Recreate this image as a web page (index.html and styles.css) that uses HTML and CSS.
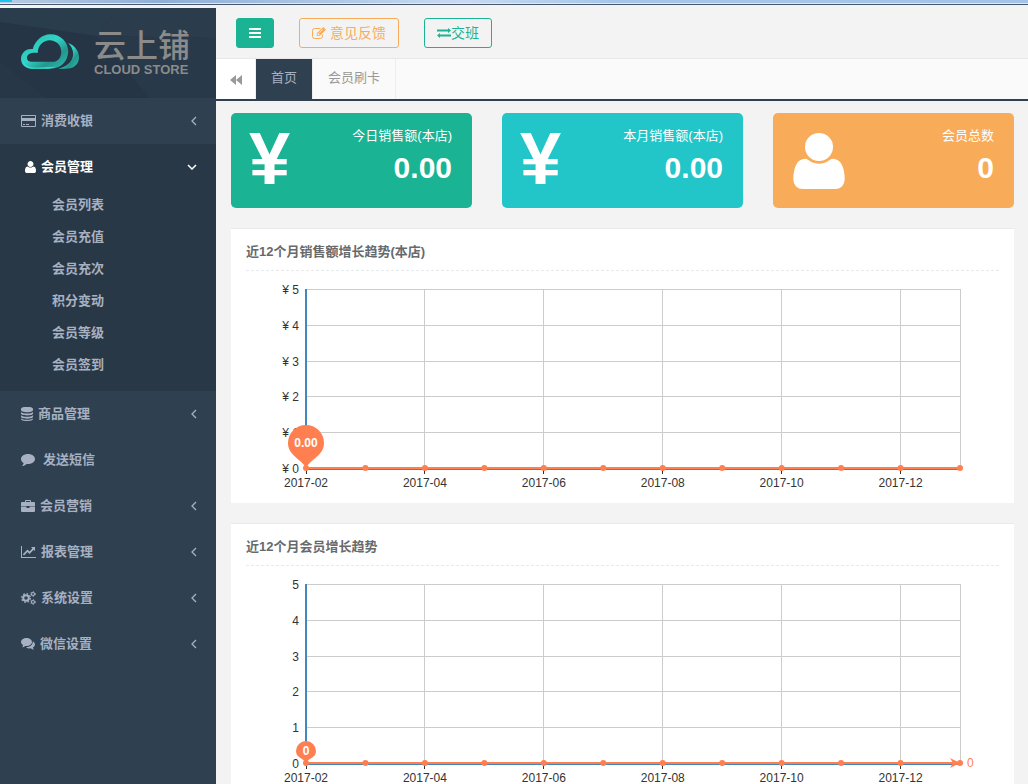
FILE: index.html
```html
<!DOCTYPE html>
<html lang="zh-CN">
<head>
<meta charset="utf-8">
<title>云上铺 CLOUD STORE</title>
<link rel="stylesheet" href="styles.css">
</head>
<body>
<svg class="defs" aria-hidden="true">
  <defs>
    <symbol id="user" viewBox="0 128 1408 1536"><path d="M1408 1405q0 120-73 189.500t-194 69.500h-874q-121 0-194-69.500t-73-189.500q0-53 3.500-103.500t14-109 26.500-108.500 43-97.500 62-81 85.500-53.500 111.500-20q9 0 42 21.500t74.500 48 108 48 133.500 21.500 133.500-21.500 108-48 74.500-48 42-21.500q61 0 111.500 20t85.500 53.500 62 81 43 97.500 26.500 108.500 14 109 3.500 103.500zm-320-893q0 159-112.500 271.500t-271.500 112.500-271.500-112.500-112.500-271.500 112.500-271.500 271.500-112.500 271.500 112.500 112.500 271.500z"/></symbol>
    <symbol id="left" viewBox="0 0 6 10"><path d="M5 1L1 5l4 4" fill="none" stroke="currentColor" stroke-width="1.300"/></symbol>
  </defs>
</svg>
<div class="strip"><i></i></div>
<div class="app">
  <aside class="sidebar">
    <div class="brand">
      <svg class="facets" viewBox="0 0 216 90" preserveAspectRatio="none" aria-hidden="true"><path d="M0 0h118L97 28 0 14z" fill="#2a3d4d"/><path d="M118 0h98v30L97 28z" fill="#2b3d4c"/><path d="M97 28l119 2v60h-66z" fill="#283949"/><path d="M0 54l46 36H0z" fill="#273747"/></svg>
      <svg class="cloud" viewBox="0 0 60 36" aria-hidden="true">
        <defs><linearGradient id="teal" x1="0" y1="0" x2="1" y2="1"><stop offset="0" stop-color="#27b7a8"/><stop offset=".45" stop-color="#30d5c8"/><stop offset=".7" stop-color="#23978d"/><stop offset="1" stop-color="#2bc1b4"/></linearGradient></defs>
        <path d="M48 9c5 1 11 7 11 14 0 8-6 12-13 12h-8c9-2 15-8 15-15 0-5-2-8-5-11z" fill="url(#teal)"/>
        <path fill-rule="evenodd" d="M12 15C14 7 21 0 30 0c10 0 18 8 18 17 0 10-7 18-18 18H12C5 35 0 31 0 25 0 19 5 14 12 15zM17 19C17 11 23 6 29 6c7 0 12 5 12 12 0 6-4 10-9 10H11c-3 0-5-2-5-4 0-4 5-6 11-5z" fill="url(#teal)"/>
        <path d="M2 27c2 5 7 7 12 7l22-1c-3 1-6 2-9 2H12C6 35 2 32 2 27z" fill="#35ddd0"/>
      </svg>
      <div class="wordmark"><b>云上铺</b><span>CLOUD STORE</span></div>
    </div>
    <nav>
      <a class="item" href="#"><svg width="15" height="12" viewBox="0 0 15 12"><path fill-rule="evenodd" d="M1 0h13q1 0 1 1v10q0 1-1 1H1q-1 0-1-1V1q0-1 1-1zm0 1v2h13V1zm0 5v5h13V6zm1 3h2v1H2zm3 0h3v1H5z"/></svg>消费收银<svg class="arrow" width="6" height="10"><use href="#left"/></svg></a>
      <div class="group">
        <a class="item current" href="#"><svg width="11" height="12"><use href="#user"/></svg>会员管理<svg class="arrow" width="10" height="6" viewBox="0 0 10 6"><path d="M1 1l4 4 4-4" fill="none" stroke="currentColor" stroke-width="1.500"/></svg></a>
        <ul><li><a href="#">会员列表</a></li><li><a href="#">会员充值</a></li><li><a href="#">会员充次</a></li><li><a href="#">积分变动</a></li><li><a href="#">会员等级</a></li><li><a href="#">会员签到</a></li></ul>
      </div>
      <a class="item" href="#"><svg width="12" height="14" viewBox="0 0 12 14"><path d="M0 2c0-3 12-3 12 0v1c0 3-12 3-12 0zM0 5c2 2 10 2 12 0v1.500c0 2.500-12 2.500-12 0zM0 8.300c2 2 10 2 12 0v1.500c0 2.500-12 2.500-12 0zM0 11.500c2 1.800 10 1.800 12 0v.5c0 2.700-12 2.700-12 0z"/></svg>商品管理<svg class="arrow" width="6" height="10"><use href="#left"/></svg></a>
      <a class="item spaced" href="#"><svg width="14" height="12" viewBox="0 0 14 12"><path d="M7 0c4 0 7 2.300 7 5s-3 5-7 5l-1.500-.1C4 11.300 2.700 11.900 1 12c1-1 1.500-1.800 1.600-3C1 8 0 6.600 0 5c0-2.700 3-5 7-5z"/></svg>发送短信</a>
      <a class="item" href="#"><svg width="14" height="12" viewBox="0 0 14 12"><path fill-rule="evenodd" d="M4 2V1q0-1 1-1h4q1 0 1 1v1h3q1 0 1 1v3.500H8.500V6h-3v.5H0V3q0-1 1-1zm1 0h4V1H5zM0 7h5.500v1h3V7H14v4q0 1-1 1H1q-1 0-1-1z"/></svg>会员营销<svg class="arrow" width="6" height="10"><use href="#left"/></svg></a>
      <a class="item" href="#"><svg width="15" height="12" viewBox="0 0 15 12"><path d="M0 0h1v11h14v1H0zM14 1v4l-1.300-1.300L8.500 8l-2-2L3 9.500 1.800 8.200 6.500 3.500l2 2 2.900-3.100L10 1z"/></svg>报表管理<svg class="arrow" width="6" height="10"><use href="#left"/></svg></a>
      <a class="item" href="#"><svg width="15" height="14" viewBox="0 0 15 14"><g fill="none" stroke="currentColor"><circle cx="5" cy="7" r="2.800" stroke-width="2"/><circle cx="5" cy="7" r="4.300" stroke-width="1.300" stroke-dasharray="1.700 1.677"/><circle cx="12" cy="3" r="1.500" stroke-width="1.200"/><circle cx="12" cy="3" r="2.400" stroke-width=".9" stroke-dasharray="1.200 1.313"/><circle cx="12" cy="11" r="1.500" stroke-width="1.200"/><circle cx="12" cy="11" r="2.400" stroke-width=".9" stroke-dasharray="1.200 1.313"/></g></svg>系统设置<svg class="arrow" width="6" height="10"><use href="#left"/></svg></a>
      <a class="item" href="#"><svg width="14" height="12" viewBox="0 0 14 12"><path d="M5.500 0C8.600 0 11 1.800 11 4S8.600 8 5.500 8l-1.200-.1Q3 9 1 9.300 2 8.300 2.100 7.200 0 6 0 4c0-2.200 2.400-4 5.500-4z"/><path d="M11.800 3.300Q14 4.500 14 6.500T11.900 9.600q.1 1 1.100 2-2-.2-3.200-1.300-2.800.5-4.800-1.100c4 0 7-2.200 6.800-5.900z"/></svg>微信设置<svg class="arrow" width="6" height="10"><use href="#left"/></svg></a>
    </nav>
  </aside>
  <main>
    <header>
      <button class="btn menu" aria-label="菜单"><svg width="12" height="10" viewBox="0 0 12 10"><path d="M0 0h12v2H0zM0 4h12v2H0zM0 8h12v2H0z"/></svg></button>
      <button class="btn orange"><svg width="14" height="12" viewBox="0 0 14 12"><path d="M10.500 7.500v2q0 2-2 2h-6q-2 0-2-2v-6q0-2 2-2h6" fill="none" stroke="currentColor"/><path fill-rule="evenodd" d="M11.200 0L14 2.800 7.500 9H4.800V6.200zM5.600 6.700v1.500h1.500l.6-.6-1.500-1.500zM7 5.600l.3.300L11 2.400l-.4-.3z"/></svg>意见反馈</button>
      <button class="btn green"><svg width="14" height="10" viewBox="0 0 14 10"><path d="M0 1.500h11V0l3 2.500L11 5V3.500H0zM14 6.500H3V5L0 7.500 3 10V8.500h11z"/></svg>交班</button>
    </header>
    <nav class="tabs">
      <button class="back" aria-label="向左"><svg width="12" height="10" viewBox="0 0 12 10"><path d="M6 0v10L0 5zM12 0v10L6 5z"/></svg></button>
      <a class="on" href="#">首页</a><a href="#">会员刷卡</a>
    </nav>
    <div class="content">
      <div class="cards">
        <section class="card c1"><span class="yen">¥</span><div><h2>今日销售额(本店)</h2><strong>0.00</strong></div></section>
        <section class="card c2"><span class="yen">¥</span><div><h2>本月销售额(本店)</h2><strong>0.00</strong></div></section>
        <section class="card c3"><svg width="52" height="56"><use href="#user"/></svg><div><h2>会员总数</h2><strong>0</strong></div></section>
      </div>
      <section class="panel">
        <h3>近12个月销售额增长趋势(本店)</h3>
        <div class="chart"><svg class="plot" id="sales" role="img" aria-label="近12个月销售额增长趋势"></svg></div>
      </section>
      <section class="panel">
        <h3>近12个月会员增长趋势</h3>
        <div class="chart"><svg class="plot" id="members" role="img" aria-label="近12个月会员增长趋势"></svg></div>
      </section>
    </div>
  </main>
</div>
<script src="chart.js"></script>
</body>
</html>
```
FILE: styles.css
```css
* { box-sizing: border-box; }
body { margin: 0; height: 100vh; overflow: hidden; display: flex; flex-direction: column; background: #f3f3f4; color: #676a6c; font: 13px/18px "Liberation Sans", "Noto Sans CJK SC", sans-serif; }
a { color: inherit; text-decoration: none; }
button { font: inherit; margin: 0; cursor: pointer; }
h2, h3, ul { margin: 0; padding: 0; list-style: none; }
svg { fill: currentColor; flex: none; }
.defs { position: absolute; width: 0; height: 0; }
.strip { height: 5px; flex: none; background: linear-gradient(90deg, #b9cbe2, #8fafd6 16%, #c8daf0 45%, #a5c5e8 60%, #a3c4e8); border-bottom: 1px solid #45566d; box-shadow: inset 0 -1px #dfeaf5; }
.strip i { display: block; width: 12px; height: 2px; background: #18c5ef; }
.app { flex: 1; min-height: 0; display: flex; }
.sidebar { width: 216px; flex: none; margin-top: 3px; background: #2f4050; color: #a7b1c2; font-weight: 600; }
.brand { height: 90px; padding: 0 0 2px 21px; display: flex; align-items: center; gap: 14px; background: #253545; position: relative; }
.facets { position: absolute; inset: 0; width: 100%; height: 100%; }
.cloud { width: 59px; height: 36px; position: relative; }
.wordmark { position: relative; color: #8b8b8b; display: flex; flex-direction: column; }
.wordmark b { font-size: 32px; line-height: 36px; font-weight: 500; }
.wordmark span { font-size: 13px; line-height: 12px; font-weight: bold; }
.item { height: 46px; padding: 0 19px 0 21px; display: flex; align-items: center; gap: 5px; }
.item.spaced { gap: 8px; }
.item.current { color: #fff; padding-left: 25px; }
.arrow { margin-left: auto; }
.group { background: #293846; padding-bottom: 10px; }
.group .item { height: 45px; }
.group li a { display: block; line-height: 32px; padding-left: 52px; }
main { flex: 1; min-width: 0; display: flex; flex-direction: column; }
header { height: 53px; flex: none; padding: 13px 20px 0; display: flex; gap: 25px; }
.btn { height: 30px; padding: 0 12px; border: 1px solid; border-radius: 3px; background: none; font-size: 14px; display: flex; align-items: center; gap: 4px; }
.menu { background: #1ab394; border-color: #1ab394; color: #fff; }
.orange { color: #f8ac59; border-color: #f8ac59; }
.green { color: #1ab394; border-color: #1ab394; gap: 0; }
.tabs { height: 43px; flex: none; display: flex; background: #fafafa; border-top: 1px solid #e7e7e7; border-bottom: 2px solid #2f4050; color: #999; line-height: 38px; }
.back { width: 40px; padding: 0; border: 0; border-right: 1px solid #eee; background: #fff; color: #999; }
.back svg { vertical-align: middle; }
.tabs a { padding: 0 15px; border-right: 1px solid #eee; }
.tabs .on { background: #2f4050; background-clip: padding-box; color: #a7b1c2; }
.content { padding: 12px 14px 0 15px; display: flex; flex-direction: column; gap: 20px; }
.cards { display: grid; grid-template-columns: repeat(3, 1fr); gap: 30px; }
.card { height: 95px; border-radius: 5px; color: #fff; padding: 14px 20px; display: flex; justify-content: space-between; text-align: right; }
.c1 { background: #1ab394; }
.c2 { background: #23c6c8; }
.c3 { background: #f8ac59; }
.card > svg { margin-top: 6px; }
.yen { margin-left: -2px; font: bold 74px/64px "Liberation Sans", sans-serif; }
.card h2 { font-size: 13px; line-height: 18px; font-weight: 400; }
.card strong { display: block; font-size: 30px; line-height: 45px; }
.panel { background: #fff; border-top: 1px solid #e7eaec; padding: 14px 15px 0; flex: none; height: 275px; }
.panel h3 { font-size: 13px; line-height: 18px; padding-bottom: 9px; border-bottom: 1px dashed #e7eaec; }
.chart { padding: 18px 39px 0 60px; }
.plot { display: block; width: 100%; height: 179px; overflow: visible; font-size: 12px; fill: #333; }
.grid { stroke: #ccc; shape-rendering: crispEdges; }
.axis { stroke: #4488bb; stroke-width: 2; shape-rendering: crispEdges; }
.tick { stroke: #333; shape-rendering: crispEdges; }
.series { stroke: #ff7f50; stroke-width: 2; shape-rendering: crispEdges; }
.mark { fill: #ff7f50; }
.pin { fill: #fff; font-weight: bold; }
```
FILE: chart.js
```js
function draw(id, prefix, radius, label, average) {
  const height = 179, steps = 5, count = 12;
  const months = ["2017-02", "2017-04", "2017-06", "2017-08", "2017-10", "2017-12"];
  const x = i => (i * 100 / (count - 1)) + "%";
  let s = "";
  for (let i = 0; i <= steps; i++) {
    const y = Math.round(height * i / steps);
    s += `<line class="grid" x1="0" x2="100%" y1="${y}" y2="${y}"/>`;
    s += `<text x="-7" y="${y + 5}" text-anchor="end">${prefix}${steps - i}</text>`;
  }
  months.forEach((m, k) => {
    s += `<line class="grid" x1="${x(k * 2)}" x2="${x(k * 2)}" y1="0" y2="${height}"/>`;
    s += `<line class="tick" x1="${x(k * 2)}" x2="${x(k * 2)}" y1="${height}" y2="${height + 6}"/>`;
    s += `<text x="${x(k * 2)}" y="${height + 19}" text-anchor="middle">${m}</text>`;
  });
  s += `<line class="grid" x1="100%" x2="100%" y1="0" y2="${height}"/>`;
  s += `<line class="axis" x1="0" x2="0" y1="0" y2="${height}"/>`;
  s += `<line class="axis" x1="0" x2="100%" y1="${height + 1}" y2="${height + 1}"/>`;
  s += `<line class="series" x1="0" x2="100%" y1="${height}" y2="${height}"/>`;
  for (let i = 0; i < count; i++) s += `<circle class="mark" cx="${x(i)}" cy="${height}" r="3"/>`;
  const r = radius, cy = height - (r > 10 ? 25 : 12);
  s += `<path class="mark" d="M0 ${height}C${-r / 4} ${height - r / 2} ${-r} ${cy + r * 0.7} ${-r} ${cy}A${r} ${r} 0 0 1 ${r} ${cy}C${r} ${cy + r * 0.7} ${r / 4} ${height - r / 2} 0 ${height}z"/>`;
  s += `<text class="pin" x="0" y="${cy + 4}" text-anchor="middle">${label}</text>`;
  if (average) {
    s += `<svg x="100%" y="${height}" overflow="visible"><path class="mark" d="M0 0l-10-5 3 5-3 5z"/><text class="mark" x="7" y="4">0</text></svg>`;
  }
  document.getElementById(id).innerHTML = s;
}
draw("sales", "¥ ", 18, "0.00", false);
draw("members", "", 10, "0", true);
```
